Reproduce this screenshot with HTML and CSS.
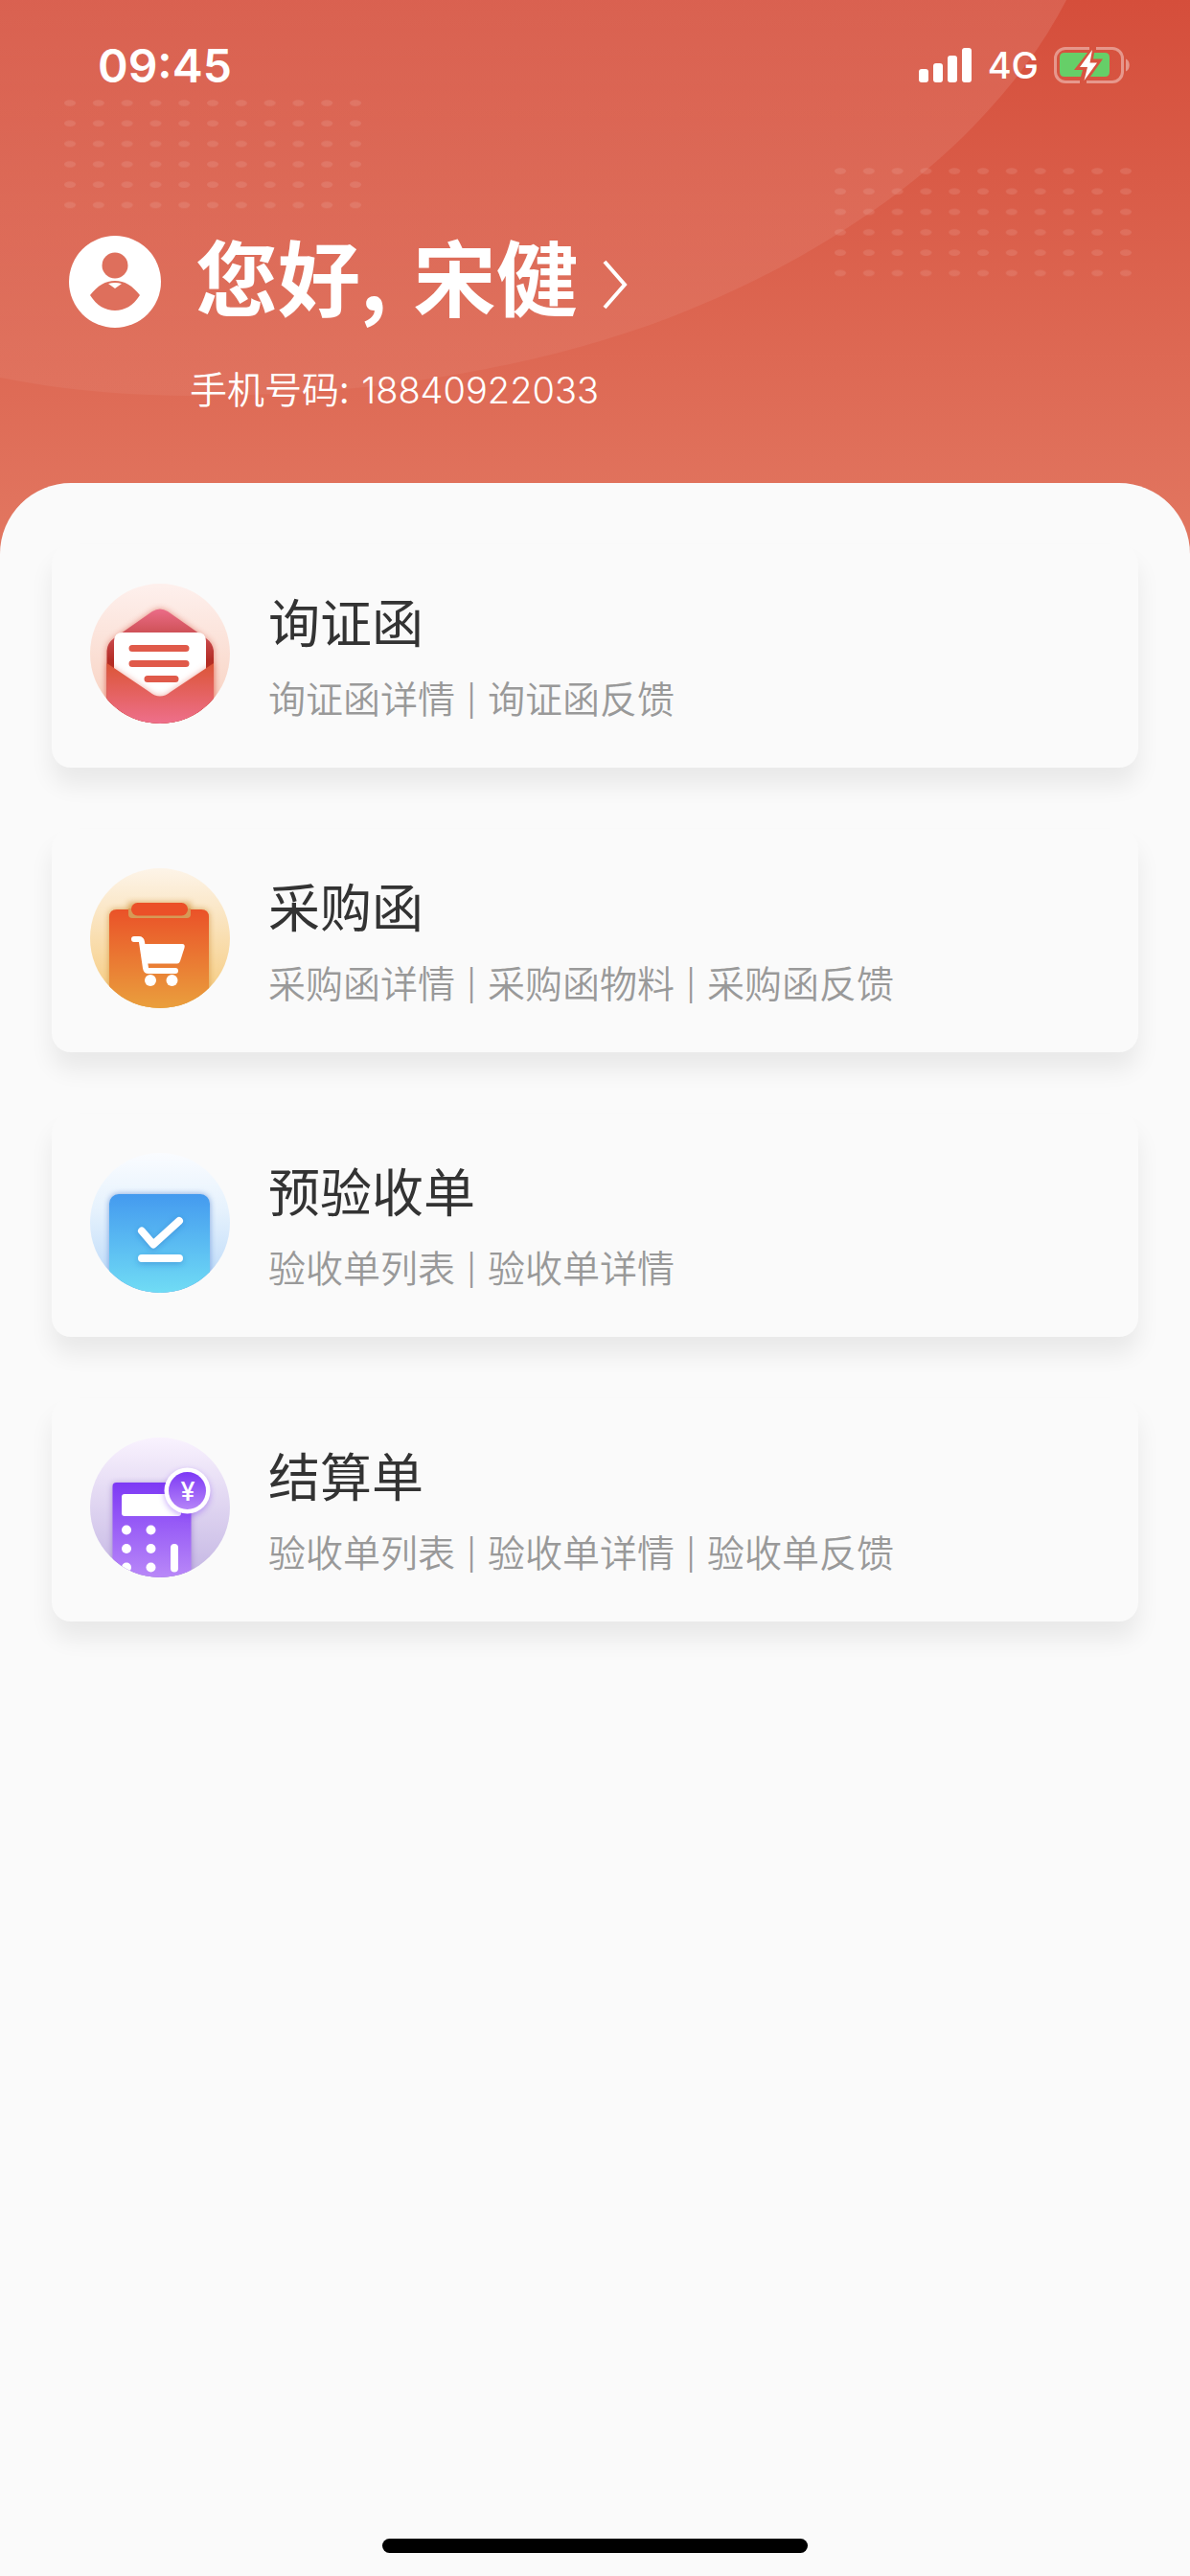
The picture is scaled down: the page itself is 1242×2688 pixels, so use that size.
FILE: index.html
```html
<!DOCTYPE html>
<html lang="zh-CN">
<head>
  <meta charset="UTF-8">
  <meta name="viewport" content="width=device-width, initial-scale=1">
  <title>首页</title>
  <link rel="stylesheet" href="styles.css">
</head>
<body>

  <header class="header">
    <svg class="header-bg" viewBox="0 0 1242 578" preserveAspectRatio="none" aria-hidden="true">
      <defs>
        <pattern id="dots" width="29.8" height="21.3" patternUnits="userSpaceOnUse">
          <ellipse cx="6" cy="3.5" rx="6" ry="3.3" fill="#fff" fill-opacity="0.1"/>
        </pattern>
        <linearGradient id="glow" x1="0" y1="0" x2="0" y2="1">
          <stop offset="0" stop-color="#fff" stop-opacity="0.11"/>
          <stop offset="1" stop-color="#fff" stop-opacity="0.05"/>
        </linearGradient>
      </defs>
      <path d="M0 0H1113C1070 84 995 162 911 220C846 265 775 302 700 331C550 388 375 413 205 413C140 413 70 408 0 394Z" fill="url(#glow)"/>
      <g transform="translate(67 104)"><rect width="312" height="116" fill="url(#dots)"/></g>
      <g transform="translate(871 175)"><rect width="312" height="116" fill="url(#dots)"/></g>
    </svg>

    <div class="status-bar">
      <span class="time">09:45</span>
      <div class="status-icons">
        <svg class="signal" width="56" height="36" viewBox="0 0 56 36" fill="#fff" aria-hidden="true">
          <rect x="0" y="22" width="10" height="14" rx="3"/>
          <rect x="15" y="16" width="10" height="20" rx="3"/>
          <rect x="30" y="8" width="10" height="28" rx="3"/>
          <rect x="45" y="0" width="10" height="36" rx="3"/>
        </svg>
        <span class="network">4G</span>
        <svg class="battery" width="80" height="38" viewBox="0 0 80 38" aria-hidden="true">
          <path d="M37 1.5H12A10.500 10.500 0 0 0 1.500 12V26A10.500 10.500 0 0 0 12 36.500H27M44 1.500H61A10.500 10.500 0 0 1 71.500 12V26A10.500 10.500 0 0 1 61 36.500H34" fill="none" stroke="#fff" stroke-opacity="0.4" stroke-width="3"/>
          <path d="M75 12.500C80 14 80 24 75 25.500Z" fill="#fff" fill-opacity="0.4"/>
          <path d="M35 6H11Q6 6 6 11V26Q6 31 11 31H28L30 24H21Z" fill="#66cf68"/>
          <path d="M42 6H53Q58 6 58 11V26Q58 31 53 31H38L51 12.500H41Z" fill="#66cf68"/>
          <path d="M40 3L27 21H35L31.500 35L45 16.500H37.500Z" fill="#fff"/>
        </svg>
      </div>
    </div>

    <a class="user" href="#profile">
      <svg class="avatar" viewBox="0 0 96 96" aria-hidden="true">
        <circle cx="48" cy="48" r="48" fill="#fff"/>
        <circle cx="48" cy="31" r="13.500" fill="#de6f5c"/>
        <path d="M22 62C30 52 38 47 48 47S66 52 74 62C67 73 58 78 48 78S29 73 22 62Z" fill="#de6f5c"/>
        <path d="M41 50Q48 48 55 50L48 55Z" fill="#fff"/>
      </svg>
      <h1 class="greeting">您好, <span class="name">宋健</span></h1>
      <svg class="arrow" width="26" height="52" viewBox="0 0 26 52" aria-hidden="true">
        <path d="M2 2L23 26L2 50" fill="none" stroke="#fff" stroke-width="4"/>
      </svg>
    </a>
    <p class="phone">手机号码: <span class="number">18840922033</span></p>
  </header>

  <main class="panel">
    <a class="card" href="#inquiry">
      <svg class="card-icon" viewBox="0 0 146 146" aria-hidden="true">
        <defs>
          <linearGradient id="c1" x1="0" y1="0" x2="0" y2="1"><stop offset="0" stop-color="#fef0ed"/><stop offset="1" stop-color="#f7cfbd"/></linearGradient>
          <linearGradient id="back1" gradientUnits="userSpaceOnUse" x1="0" y1="26" x2="0" y2="88"><stop offset="0" stop-color="#ec6d89"/><stop offset="0.4" stop-color="#cf5258"/><stop offset="1" stop-color="#ac2318"/></linearGradient>
          <linearGradient id="front1" gradientUnits="userSpaceOnUse" x1="0" y1="83" x2="0" y2="146"><stop offset="0" stop-color="#db5536"/><stop offset="1" stop-color="#ee6f8b"/></linearGradient>
          <clipPath id="round"><circle cx="73" cy="73" r="73"/></clipPath>
          <filter id="soft" x="-30%" y="-30%" width="160%" height="160%"><feGaussianBlur stdDeviation="3"/></filter>
        </defs>
        <circle cx="73" cy="73" r="73" fill="url(#c1)"/>
        <g clip-path="url(#round)">
          <path d="M17.500 146V70Q18 62 25 57L65 29Q73 24 81 29L121 57Q128 62 129 70V146Z" fill="#d9503c" opacity="0.6" filter="url(#soft)"/>
          <path d="M17.500 146V70Q18 62 25 57L65 29Q73 24 81 29L121 57Q128 62 129 70V146Z" fill="url(#back1)"/>
          <path d="M25 130V60Q25 51 34 51H112Q121 51 121 60V130Z" fill="#fff"/>
          <path d="M17.500 83L62 113Q73 122 84 113L129 83V146H17.500Z" fill="#e05a4a" opacity="0.5" filter="url(#soft)"/>
          <path d="M17.500 83L62 113Q73 122 84 113L129 83V146H17.500Z" fill="url(#front1)"/>
          <path d="M44 67.500H100M44 83.500H100M60 99.500H89" stroke="#e05a4a" stroke-width="7" stroke-linecap="round"/>
        </g>
      </svg>
      <div class="card-text">
        <h2>询证函</h2>
        <p><span>询证函详情</span><i>|</i><span>询证函反馈</span></p>
      </div>
    </a>

    <a class="card" href="#purchase">
      <svg class="card-icon" viewBox="0 0 146 146" aria-hidden="true">
        <defs>
          <linearGradient id="c2" x1="0" y1="0" x2="0" y2="1"><stop offset="0" stop-color="#fdf4e8"/><stop offset="1" stop-color="#f5c878"/></linearGradient>
          <linearGradient id="front2" gradientUnits="userSpaceOnUse" x1="0" y1="36" x2="0" y2="146"><stop offset="0" stop-color="#ea4d27"/><stop offset="1" stop-color="#ea9f3d"/></linearGradient>
        </defs>
        <circle cx="73" cy="73" r="73" fill="url(#c2)"/>
        <g clip-path="url(#round)">
          <path d="M20 146V51Q20 43 28 43H40V36H105V43H116Q124 43 124 51V146Z" fill="#c98427" opacity="0.7" filter="url(#soft)"/>
          <path d="M20 146V51Q20 43 28 43H116Q124 43 124 51V146Z" fill="url(#front2)"/>
          <path d="M40 42H105V48Q105 52 101 52H44Q40 52 40 48Z" fill="#d69a56"/>
          <rect x="43" y="36" width="59" height="13.500" rx="6.500" fill="#eb5028"/>
          <path d="M46 74H51Q53.500 74 54 77L58 104Q58.500 107 61 107H89" fill="none" stroke="#fff" stroke-width="6" stroke-linecap="round"/>
          <path d="M55 79H96Q99.500 79 98.500 83L94 97Q93 99.500 91 99.500H58Z" fill="#fff"/>
          <circle cx="63" cy="117" r="6" fill="#fff"/>
          <circle cx="85.500" cy="117" r="6" fill="#fff"/>
        </g>
      </svg>
      <div class="card-text">
        <h2>采购函</h2>
        <p><span>采购函详情</span><i>|</i><span>采购函物料</span><i>|</i><span>采购函反馈</span></p>
      </div>
    </a>

    <a class="card" href="#acceptance">
      <svg class="card-icon" viewBox="0 0 146 146" aria-hidden="true">
        <defs>
          <linearGradient id="c3" x1="0" y1="0" x2="0" y2="1"><stop offset="0" stop-color="#fafcff"/><stop offset="0.4" stop-color="#e6f2fd"/><stop offset="1" stop-color="#b6d6f8"/></linearGradient>
          <linearGradient id="front3" gradientUnits="userSpaceOnUse" x1="0" y1="43" x2="0" y2="146"><stop offset="0" stop-color="#449aef"/><stop offset="1" stop-color="#70dcf5"/></linearGradient>
        </defs>
        <circle cx="73" cy="73" r="73" fill="url(#c3)"/>
        <g clip-path="url(#round)">
          <rect x="20" y="43" width="105" height="120" rx="10" fill="#4f80d0" opacity="0.7" filter="url(#soft)"/>
          <rect x="20" y="43" width="105" height="120" rx="10" fill="url(#front3)"/>
          <path d="M54 83L66 97L93 72M54 112H93" fill="none" stroke="#2a78c8" stroke-opacity="0.5" stroke-width="8" stroke-linecap="round" filter="url(#soft)"/>
          <path d="M54 81.500L66 95.500L93 71M54 110H93" fill="none" stroke="#fff" stroke-width="8" stroke-linecap="round" stroke-linejoin="round"/>
        </g>
      </svg>
      <div class="card-text">
        <h2>预验收单</h2>
        <p><span>验收单列表</span><i>|</i><span>验收单详情</span></p>
      </div>
    </a>

    <a class="card" href="#settlement">
      <svg class="card-icon" viewBox="0 0 146 146" aria-hidden="true">
        <defs>
          <linearGradient id="c4" x1="0" y1="0" x2="0" y2="1"><stop offset="0" stop-color="#f9f2fe"/><stop offset="1" stop-color="#c4b6e3"/></linearGradient>
          <linearGradient id="front4" gradientUnits="userSpaceOnUse" x1="0" y1="47" x2="0" y2="146"><stop offset="0" stop-color="#7d39f5"/><stop offset="1" stop-color="#b988f8"/></linearGradient>
          <linearGradient id="coin" x1="0" y1="0" x2="0" y2="1"><stop offset="0" stop-color="#7d39f5"/><stop offset="1" stop-color="#b584f8"/></linearGradient>
        </defs>
        <circle cx="73" cy="73" r="73" fill="url(#c4)"/>
        <g clip-path="url(#round)">
          <rect x="23.500" y="48" width="82" height="110" rx="4" fill="#6d4bb0" opacity="0.5" filter="url(#soft)"/>
          <rect x="23.500" y="47" width="82" height="110" rx="4" fill="url(#front4)"/>
          <rect x="33" y="59" width="62" height="23" rx="3" fill="#fff"/>
          <g fill="#fff">
            <circle cx="38" cy="96.500" r="5"/><circle cx="63.500" cy="96.500" r="5"/>
            <circle cx="38" cy="116" r="5"/><circle cx="63.500" cy="116" r="5"/>
            <circle cx="38" cy="135.500" r="5"/><circle cx="63.500" cy="135.500" r="5"/>
            <rect x="84" y="111" width="8" height="29.500" rx="4"/>
          </g>
          <circle cx="101.500" cy="58" r="24" fill="#7d39f5" opacity="0.4" filter="url(#soft)"/>
          <circle cx="101.500" cy="55.500" r="24" fill="#fff"/>
          <circle cx="101.500" cy="55.500" r="19.500" fill="url(#coin)"/>
          <text class="yen" x="102" y="66" text-anchor="middle">¥</text>
        </g>
      </svg>
      <div class="card-text">
        <h2>结算单</h2>
        <p><span>验收单列表</span><i>|</i><span>验收单详情</span><i>|</i><span>验收单反馈</span></p>
      </div>
    </a>
  </main>

  <div class="home-indicator"></div>

</body>
</html>
```
FILE: styles.css
```css
* {
  box-sizing: border-box;
  margin: 0;
  padding: 0;
}
body {
  display: flex;
  flex-direction: column;
  min-height: 100vh;
  background-color: #fafafa;
  color: #333333;
  font-family: "Noto Sans CJK SC", sans-serif;
}
a {
  color: inherit;
  text-decoration: none;
}

/* header */
.header {
  position: relative;
  padding: 40px 62px 146px 72px;
  background: linear-gradient(#d54e3b, #e27761);
  color: #ffffff;
}
.header-bg {
  position: absolute;
  top: 0;
  left: 0;
  width: 100%;
  height: 100%;
}
.status-bar,
.user,
.phone {
  position: relative;
}
.status-bar {
  display: flex;
  align-items: center;
  justify-content: space-between;
  height: 56px;
  padding-left: 30px;
  font-family: Inter, sans-serif;
}
.time {
  font-size: 48px;
  font-weight: 600;
}
.status-icons {
  display: flex;
  align-items: center;
  gap: 16px;
}
.network {
  font-size: 38px;
  font-weight: 500;
}
.user {
  display: flex;
  align-items: center;
  margin-top: 134px;
}
.avatar {
  width: 96px;
  height: 96px;
  margin-right: 36px;
}
.greeting {
  padding-bottom: 14px;
  font-size: 86px;
  line-height: 114px;
  font-weight: 700;
}
.name {
  margin-left: 8px;
}
.arrow {
  margin-top: 6px;
  margin-left: 26px;
}
.phone {
  margin-top: 18px;
  padding-left: 126px;
  font-size: 39px;
  line-height: 56px;
  font-weight: 350;
}
.number {
  margin-left: 4px;
  font-family: Inter, sans-serif;
  font-size: 38px;
  line-height: 1;
  font-weight: 300;
}

/* menu */
.panel {
  position: relative;
  display: flex;
  flex-direction: column;
  gap: 64px;
  margin-top: -74px;
  padding: 64px 54px;
  border-radius: 74px 74px 0 0;
  background-color: #fafafa;
}
.card {
  display: flex;
  align-items: center;
  gap: 40px;
  padding: 41px 40px 46px;
  border-radius: 20px;
  background-color: #fafafa;
  box-shadow: 0 18px 24px rgba(0, 0, 0, 0.07);
}
.card-icon {
  flex: none;
  width: 146px;
  height: 146px;
}
.card-text h2 {
  font-size: 54px;
  line-height: 78px;
  font-weight: 400;
}
.card-text p {
  display: flex;
  margin-top: 12px;
  color: #999999;
  font-size: 39px;
  line-height: 56px;
  font-weight: 350;
}
.card-text i {
  width: 34px;
  font-size: 34px;
  font-style: normal;
  font-weight: 400;
  text-align: center;
}
.yen {
  fill: #ffffff;
  font-family: Inter, sans-serif;
  font-size: 27px;
  font-weight: 500;
}

.home-indicator {
  width: 444px;
  height: 15px;
  margin: auto auto 24px;
  border-radius: 8px;
  background-color: #000000;
}
```
